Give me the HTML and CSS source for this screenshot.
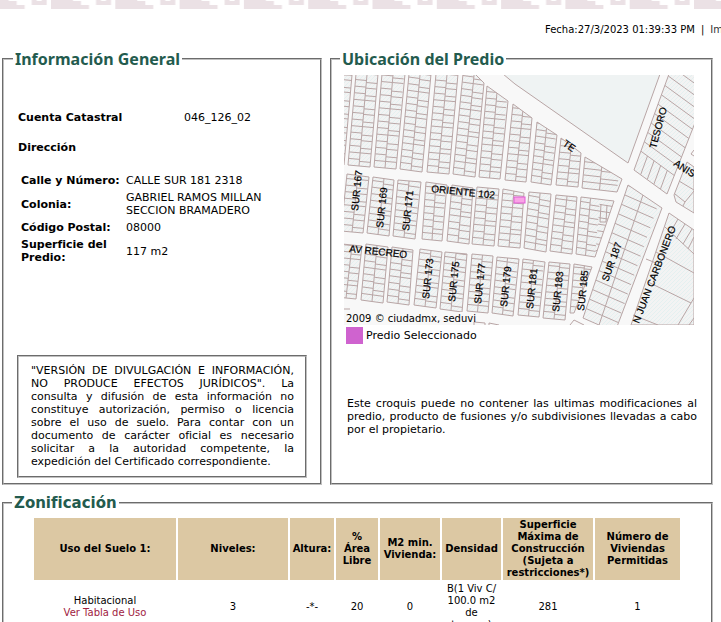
FILE: index.html
```html
<!DOCTYPE html>
<html lang="es">
<head>
<meta charset="utf-8">
<title>Información del predio</title>
<link rel="stylesheet" href="styles.css">
</head>
<body>
<header>
  <svg class="greca" width="100%" height="10" aria-hidden="true">
    <defs>
      <pattern id="greca" x="51" y="0" width="64.3" height="10" patternUnits="userSpaceOnUse">
        <path d="M0 0H22V1H30V5H38V9H0ZM45 0H50V1H55V0H60V5H45Z" fill="#ebe1e5"/>
      </pattern>
    </defs>
    <rect width="100%" height="10" fill="url(#greca)"/>
  </svg>
  <div class="toolbar"><span class="fecha">Fecha:27/3/2023 01:39:33 PM</span> <span class="sep">|</span> <a href="#">Imprimir</a></div>
</header>
<main>
  <div class="panels">
    <fieldset class="info">
      <legend>Información General</legend>
      <dl class="cuenta">
        <dt>Cuenta Catastral</dt><dd>046_126_02</dd>
      </dl>
      <h2>Dirección</h2>
      <table class="direccion">
        <tr><th scope="row">Calle y Número:</th><td>CALLE SUR 181 2318</td></tr>
        <tr><th scope="row">Colonia:</th><td>GABRIEL RAMOS MILLAN SECCION BRAMADERO</td></tr>
        <tr><th scope="row">Código Postal:</th><td>08000</td></tr>
        <tr><th scope="row">Superficie del Predio:</th><td>117 m2</td></tr>
      </table>
      <p class="aviso">"VERSIÓN DE DIVULGACIÓN E INFORMACIÓN,<br>NO PRODUCE EFECTOS JURÍDICOS". La<br>consulta y difusión de esta información no<br>constituye autorización, permiso o licencia<br>sobre el uso de suelo. Para contar con un<br>documento de carácter oficial es necesario<br>solicitar a la autoridad competente, la <span class="final">expedición del Certificado correspondiente.</span></p>
    </fieldset>
    <fieldset class="ubicacion">
      <legend>Ubicación del Predio</legend>
      <svg class="mapa" viewBox="0 0 350 250" width="350" height="250" role="img" aria-label="Croquis de ubicación">
        <defs>
          <pattern id="trama" width="4" height="4" patternUnits="userSpaceOnUse">
            <rect width="4" height="4" fill="#f3f3f3"/>
            <path d="M-1 1L1-1M0 4L4 0M3 5L5 3" stroke="#e4f0f0" stroke-width="1"/>
          </pattern>
        </defs>
        <rect width="350" height="250" fill="#f8f8f8"/>
        <g id="manzanas"></g>
        <g class="lotes">
          <path class="parque" d="M159 -1L171 9L284 88L316 -1Z"/>
          <path class="relleno" d="M343 87L350 92V138L332 127L330 120Z"/>
          <path d="M335 106L350 115M331 119L341 127L350 116M341 127L339 131M350 75L347 79L350 81"/>
          <path class="relleno" d="M325 138L350 155V250H287Z"/>
          <path d="M321 152L350 179M334 144L326 158M341 149L332 164M348 154L339 169M350 162L344 174M312 177L350 198M304 207L347 228L334 250M347 228L350 223M289 240L314 250M350 243L345 250M302 184L312 188"/>
          <path d="M0 234H6M130 250V247L141 248V250M145 250V248L155 250M226 250L230 245L240 250M257 129L256 147H262L263 130"/>
        </g>
        <rect x="170" y="122" width="11" height="6" fill="#f9a4e6" stroke="#e05bd6"/>
        <g class="calles">
          <text transform="translate(14 136) rotate(-84)">SUR 167</text>
          <text transform="translate(39 153) rotate(-84)">SUR 169</text>
          <text transform="translate(65 156) rotate(-84)">SUR 171</text>
          <text transform="translate(87 117) rotate(6)">ORIENTE 102</text>
          <text transform="translate(5 177) rotate(6)">AV RECREO</text>
          <text transform="translate(85 224) rotate(-84)">SUR 173</text>
          <text transform="translate(111 227) rotate(-84)">SUR 175</text>
          <text transform="translate(137 229) rotate(-84)">SUR 177</text>
          <text transform="translate(163 232) rotate(-84)">SUR 179</text>
          <text transform="translate(189 234) rotate(-84)">SUR 181</text>
          <text transform="translate(215 237) rotate(-84)">SUR 183</text>
          <text transform="translate(240 236) rotate(-84)">SUR 185</text>
          <text transform="translate(264 207) rotate(-70)">SUR 187</text>
          <text transform="translate(218 70) rotate(35)">TE</text>
          <text transform="translate(312 74) rotate(-75)">TESORO</text>
          <text transform="translate(329 90) rotate(33)">ANIS</text>
          <text transform="translate(295 249) rotate(-69)">N JUAN CARBONERO</text>
        </g>
        <rect y="237" width="128" height="13" fill="#f8f8f8"/>
        <text class="credito" x="2" y="247">2009 © ciudadmx, seduvi</text>
      </svg>
      <div class="leyenda"><span class="muestra"></span>Predio Seleccionado</div>
      <p class="croquis">Este croquis puede no contener las ultimas modificaciones al predio, producto de fusiones y/o subdivisiones llevadas a cabo por el propietario.</p>
    </fieldset>
  </div>
  <fieldset class="zonificacion">
    <legend>Zonificación</legend>
    <table class="zona">
      <colgroup><col class="c-uso"><col class="c-niv"><col class="c-alt"><col class="c-area"><col class="c-m2"><col class="c-den"><col class="c-sup"><col class="c-num"></colgroup>
      <thead>
        <tr><th>Uso del Suelo 1:</th><th>Niveles:</th><th>Altura:</th><th>%<br>Área<br>Libre</th><th>M2 min. Vivienda:</th><th>Densidad</th><th>Superficie Máxima de Construcción (Sujeta a restricciones*)</th><th>Número de Viviendas Permitidas</th></tr>
      </thead>
      <tbody>
        <tr><td>Habitacional<br><a href="#">Ver Tabla de Uso</a></td><td>3</td><td>-*-</td><td>20</td><td>0</td><td>B(1 Viv C/<br>100.0 m2<br>de<br>terreno)</td><td>281</td><td>1</td></tr>
      </tbody>
    </table>
  </fieldset>
</main>
<script src="mapa.js"></script>
</body>
</html>
```
FILE: styles.css
```css
body {
  margin: 0;
  overflow: hidden;
  background: #fff;
  color: #000;
  font: 11px/13px "DejaVu Sans", Verdana, sans-serif;
}

.greca { display: block; }

.toolbar {
  display: flex;
  justify-content: flex-start;
  gap: 6px;
  margin: 13px 0;
  padding-left: 545px;
  font-size: 10px;
  white-space: nowrap;
}
.toolbar a { color: #333; text-decoration: none; }

main { padding: 0 8px 0 2px; }

.panels {
  display: grid;
  grid-template-columns: 320fr 383fr;
  gap: 8px;
  margin-bottom: 8px;
}

fieldset {
  min-width: 0;
  margin: 0;
  border: 2px groove #c0c0c0;
  padding: 0 12px;
}
.panels fieldset { padding-bottom: 5px; }
legend {
  margin-left: -4px;
  padding: 0 2px;
  color: #235b4e;
  font: bold 16px/20px "Noto Sans", sans-serif;
}

.panels .info { padding: 0 13px 5px; }
.cuenta { display: flex; margin: 42px 0 17px; padding-left: 1px; }
.cuenta dt { flex: 0 0 166px; font-weight: bold; }
.cuenta dd { margin: 0; }
.info h2 { margin: 0 0 16px; padding-left: 1px; font-size: 11px; line-height: 13px; }

.direccion { border-spacing: 2px 4px; width: 272px; margin-left: 1px; }
.direccion th, .direccion td { padding: 0 1px; text-align: left; }
.direccion th { width: 101px; }

.aviso {
  margin: 87px 0 0;
  padding: 7px 11px 8px 12px;
  border: 2px groove #c0c0c0;
  text-align: justify;
  text-align-last: justify;
}
.final { display: block; text-align-last: left; }

.mapa { display: block; overflow: hidden; margin-top: 6px; }
.lotes path { fill: none; stroke: #b8a5a5; stroke-width: 1; }
.lotes .parque { fill: #eff3f3; }
.lotes .relleno, .manzana { fill: url(#trama); stroke: #b8a5a5; }
.division { fill: none; stroke: #b8a5a5; }
.calles { font: 10px "Liberation Sans", sans-serif; stroke: #000; stroke-width: 0.2; }
.credito { font: 10px "DejaVu Sans", sans-serif; }

.leyenda { display: flex; align-items: center; gap: 3px; margin: 2px 0 53px 2px; }
.muestra { width: 17px; height: 17px; background: #cf63cf; }
.croquis { margin: 0 2px 0 3px; text-align: justify; }

.zonificacion { padding: 0 28px 20px; }
.zonificacion legend { margin-left: -20px; font: bold 15px/20px "DejaVu Sans", sans-serif; }
.zona {
  width: 650px;
  margin-top: 3px;
  border-spacing: 2px;
  table-layout: fixed;
  font-size: 10px;
  line-height: 12px;
  text-align: center;
}
.zona th, .zona td { padding: 1px; }
.zona th { background: #dcc8a3; }
.zona a { color: #9f2241; text-decoration: none; }
.c-uso { width: 142px; }
.c-niv { width: 110px; }
.c-alt { width: 44px; }
.c-area { width: 42px; }
.c-m2 { width: 60px; }
.c-den { width: 59px; }
.c-sup { width: 90px; }
.c-num { width: 85px; }
```
FILE: mapa.js
```js
// Each block: bottom-left, bottom-right, then the rest counter-clockwise, ending at top-left.
const blocks = [
  [[-20,88],[0,90],[8,0],[-12,0]],
  [[4,90],[26,92],[34,-1],[12,-1]],
  [[30,92],[52,94],[61,-1],[38,-1]],
  [[56,94],[78,97],[87,-1],[65,-1]],
  [[83,97],[105,99],[114,-1],[92,-1]],
  [[109,99],[131,102],[140,8],[131,-1],[119,-1]],
  [[135,102],[156,104],[164,26],[143,11]],
  [[161,105],[182,107],[188,43],[169,29]],
  [[187,107],[207,110],[213,60],[193,47]],
  [[212,110],[234,112],[237,78],[217,63]],
  [[238,113],[273,117],[278,104],[241,82]],
  [[-3,156],[19,158],[25,102],[3,99]],
  [[23,158],[45,161],[50,105],[29,102]],
  [[49,161],[71,164],[77,107],[54,105]],
  [[78,164],[98,166],[103,110],[82,107]],
  [[103,166],[125,169],[129,113],[108,110]],
  [[128,169],[150,171],[155,114],[133,112]],
  [[154,171],[176,173],[180,118],[159,114]],
  [[180,173],[202,177],[207,119],[185,117]],
  [[206,176],[228,179],[233,122],[212,120]],
  [[232,179],[251,182],[270,126],[237,122]],
  [[-8,222],[12,224],[18,171],[-2,169]],
  [[17,225],[39,228],[44,172],[22,169]],
  [[43,227],[65,230],[69,175],[48,172]],
  [[70,230],[92,233],[98,177],[76,174]],
  [[96,234],[118,237],[123,179],[101,177]],
  [[123,236],[144,238],[149,181],[128,179]],
  [[148,238],[169,241],[175,184],[153,182]],
  [[174,240],[195,242],[201,187],[179,184]],
  [[199,243],[221,245],[226,189],[205,187]],
  [[226,238],[230,238],[248,192],[230,189]],
  [[239,243],[271,257],[318,133],[284,110]],
  [[290,95],[323,119],[360,25],[360,-1],[325,-1]]
];

const NS = "http://www.w3.org/2000/svg";
const group = document.getElementById("manzanas");

function add(parent, name, attrs) {
  const el = document.createElementNS(NS, name);
  for (const key in attrs) el.setAttribute(key, attrs[key]);
  parent.appendChild(el);
  return el;
}

blocks.forEach((pts, i) => {
  const list = pts.map(p => p.join(",")).join(" ");
  const clip = add(group, "clipPath", { id: "m" + i });
  add(clip, "polygon", { points: list });
  add(group, "polygon", { class: "manzana", points: list });

  const a = pts[0];
  const b = i === 30 ? [247, 240] : pts[1];
  const top = pts[pts.length - 1];
  const len = Math.hypot(top[0] - a[0], top[1] - a[1]);
  const ux = (top[0] - a[0]) / len;
  const uy = (top[1] - a[1]) / len;
  const at = (t, s) => (a[0] + (b[0] - a[0]) * t + ux * s).toFixed(1) + " " + (a[1] + (b[1] - a[1]) * t + uy * s).toFixed(1);
  const wide = i >= 31;
  const step = wide ? 10 : 6.6;

  let d = i === 32 ? "" : "M" + at(0.5, 0) + "L" + at(0.5, len + 30);
  for (let s = step, n = 0; s < len + 30; s += step, n++) {
    const shift = wide ? 0 : [1, 2, 0, 2][(n + i) % 4];
    if (i === 32 && s < 15) continue;
    d += "M" + at(0, s) + "L" + at(0.5, s) + "M" + at(0.5, s - shift) + "L" + at(i === 32 ? 1.4 : 1, s - shift);
  }
  if (i === 32) {
    for (let t = 0.2; t < 1; t += 0.2) d += "M" + at(t, 0) + "L" + at(t, 20);
  }
  if (i === 20) {
    for (let s = step; s < len; s += step) d += "M" + at(1, s) + "L" + at(2, s);
  }
  add(group, "path", { class: "division", d: d, "clip-path": "url(#m" + i + ")" });
});
```
